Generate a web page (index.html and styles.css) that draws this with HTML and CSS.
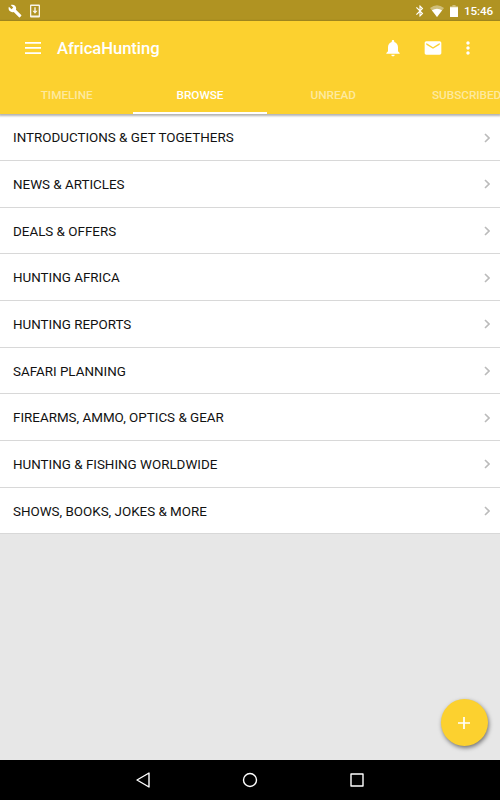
FILE: index.html
```
<!DOCTYPE html>
<html lang="en">
<head>
<meta charset="utf-8">
<title>AfricaHunting</title>
<link rel="stylesheet" href="styles.css">
</head>
<body>
<div class="screen">
  <div class="status">
    <svg class="wrench" viewBox="0 0 24 24"><path d="M22.7 19l-9.1-9.1c.9-2.3.4-5-1.5-6.9-2-2-5-2.4-7.4-1.3L9 6 6 9 1.6 4.7C.4 7.1.9 10.1 2.9 12.1c1.900 1.900 4.600 2.400 6.900 1.500l9.100 9.100c.4.4 1 .4 1.400 0l2.300-2.300c.5-.4.5-1.100.1-1.400z"/></svg>
    <svg class="download" viewBox="0 0 10 14"><path fill-rule="evenodd" d="M1 .5h8q1 0 1 1v11q0 1-1 1H1q-1 0-1-1v-11q0-1 1-1zM1.300 2v9.400h7.400V2z"/><path d="M4.300 3.200h1.400v3.600h1.900L5 9.800 2.400 6.800h1.900z"/></svg>
    <span class="spacer"></span>
    <svg class="bluetooth" viewBox="5 2 14 20"><path d="M17.710 7.710L12 2h-1v7.590L6.410 5 5 6.410 10.590 12 5 17.590 6.410 19 11 14.410V22h1l5.710-5.710-4.300-4.290 4.300-4.290zM13 5.830l1.880 1.880L13 9.590V5.830zm1.880 10.460L13 18.170v-3.760l1.880 1.880z"/></svg>
    <svg class="wifi" viewBox="0 0 14 12"><path opacity=".4" d="M7 12L0 3Q7-2.600 14 3z"/><path d="M7 12L1.900 5.300Q7 2.200 12.100 5.300z"/></svg>
    <svg class="battery" viewBox="0 0 8 12"><path opacity=".4" d="M2.400 0h3.200v1.200H8v2H0v-2h2.400z"/><path d="M0 2.200h8V11.400q0 .6-.6.6H.6q-.6 0-.6-.6z"/></svg>
    <span class="clock">15:46</span>
  </div>
  <header class="appbar">
    <div class="toolbar">
      <svg class="menu" viewBox="0 0 16 12"><path d="M0 0h16v1.700H0zM0 5.100h16v1.700H0zM0 10.200h16v1.700H0z"/></svg>
      <h1 class="title">AfricaHunting</h1>
      <span class="spacer"></span>
      <svg class="action bell" viewBox="0 0 24 24"><path d="M12 22c1.100 0 2-.9 2-2h-4c0 1.100.89 2 2 2zm6-6v-5c0-3.070-1.640-5.640-4.500-6.320V4c0-.83-.67-1.500-1.500-1.500s-1.500.67-1.500 1.500v.68C7.630 5.360 6 7.920 6 11v5l-2 2v1h16v-1l-2-2z"/></svg>
      <svg class="action mail" viewBox="0 0 24 24"><path d="M20 4H4c-1.100 0-1.990.9-1.990 2L2 18c0 1.100.9 2 2 2h16c1.100 0 2-.9 2-2V6c0-1.100-.9-2-2-2zm0 4l-8 5-8-5V6l8 5 8-5v2z"/></svg>
      <svg class="action more" viewBox="0 0 24 24"><path d="M12 8c1.100 0 2-.9 2-2s-.9-2-2-2-2 .9-2 2 .9 2 2 2zm0 2c-1.100 0-2 .9-2 2s.9 2 2 2 2-.9 2-2-.9-2-2-2zm0 6c-1.100 0-2 .9-2 2s.9 2 2 2 2-.9 2-2-.9-2-2-2z"/></svg>
    </div>
    <nav class="tabs">
      <span class="tab">TIMELINE</span>
      <span class="tab active">BROWSE</span>
      <span class="tab">UNREAD</span>
      <span class="tab">SUBSCRIBED</span>
    </nav>
  </header>
  <main class="content">
    <ul class="forums">
      <li class="forum"><span>INTRODUCTIONS &amp; GET TOGETHERS</span><svg class="chevron" viewBox="0 0 6 10"><path d="M1 1l4 4-4 4"/></svg></li>
      <li class="forum"><span>NEWS &amp; ARTICLES</span><svg class="chevron" viewBox="0 0 6 10"><path d="M1 1l4 4-4 4"/></svg></li>
      <li class="forum"><span>DEALS &amp; OFFERS</span><svg class="chevron" viewBox="0 0 6 10"><path d="M1 1l4 4-4 4"/></svg></li>
      <li class="forum"><span>HUNTING AFRICA</span><svg class="chevron" viewBox="0 0 6 10"><path d="M1 1l4 4-4 4"/></svg></li>
      <li class="forum"><span>HUNTING REPORTS</span><svg class="chevron" viewBox="0 0 6 10"><path d="M1 1l4 4-4 4"/></svg></li>
      <li class="forum"><span>SAFARI PLANNING</span><svg class="chevron" viewBox="0 0 6 10"><path d="M1 1l4 4-4 4"/></svg></li>
      <li class="forum"><span>FIREARMS, AMMO, OPTICS &amp; GEAR</span><svg class="chevron" viewBox="0 0 6 10"><path d="M1 1l4 4-4 4"/></svg></li>
      <li class="forum"><span>HUNTING &amp; FISHING WORLDWIDE</span><svg class="chevron" viewBox="0 0 6 10"><path d="M1 1l4 4-4 4"/></svg></li>
      <li class="forum"><span>SHOWS, BOOKS, JOKES &amp; MORE</span><svg class="chevron" viewBox="0 0 6 10"><path d="M1 1l4 4-4 4"/></svg></li>
    </ul>
    <button class="fab" aria-label="New topic"><svg viewBox="0 0 12 12"><path d="M6 0v12M0 6h12"/></svg></button>
  </main>
  <footer class="navbar">
    <svg viewBox="0 0 16 16"><path d="M14 1v14L2 8z"/></svg>
    <svg viewBox="0 0 16 16"><circle cx="8" cy="8" r="6.500"/></svg>
    <svg viewBox="0 0 16 16"><rect x="2" y="2" width="12" height="12"/></svg>
  </footer>
</div>
</body>
</html>
```
FILE: styles.css
```
* { box-sizing: border-box; }
body { margin: 0; font-family: Roboto, "Liberation Sans", sans-serif; }
svg { display: block; flex: none; fill: #fff; }
.screen { width: 500px; height: 800px; display: flex; flex-direction: column; overflow: hidden; background: #e7e7e7; }
.spacer { flex: 1; }

.status { flex: none; height: 21px; padding: 0 6px 0 8px; display: flex; align-items: center; background: #b09322; color: #fff; }
.wrench { width: 14px; height: 14px; }
.download { width: 10px; height: 14px; margin-left: 8px; opacity: .9; }
.bluetooth { width: 8px; height: 12px; margin-right: 6px; }
.wifi { width: 14px; height: 12px; margin-right: 6px; }
.battery { width: 8px; height: 12px; margin-right: 6px; }
.clock { width: 30px; font-size: 11.67px; font-weight: 500; line-height: 21px; padding-top: 1px; letter-spacing: -.1px; }

.appbar { flex: none; height: 93px; position: relative; z-index: 1; background: #fcd12f; box-shadow: 0 1px 2px 1px rgba(0, 0, 0, .3); }
.toolbar { height: 53px; padding: 0 22px 0 25px; display: flex; align-items: center; color: #fff; }
.menu { width: 16px; height: 12px; }
.title { margin: 2px 0 0 16px; font-size: 16.67px; line-height: 20px; font-weight: 500; letter-spacing: -.08px; }
.action { width: 20px; height: 20px; }
.bell { margin-right: 20px; }
.mail { margin-right: 15px; }
.tabs { height: 40px; display: flex; overflow: hidden; }
.tab { flex: 0 0 133.333px; text-align: center; font-size: 11.8px; line-height: 42px; font-weight: 500; letter-spacing: -.05px; color: rgba(255, 255, 255, .55); }
.tab.active { color: #fff; border-bottom: 2px solid #fff; }

.content { flex: 1; position: relative; padding-top: .35px; }
.forums { list-style: none; margin: 0; padding: 0; }
.forum { height: 46.667px; padding: 0 10px 0 13px; display: flex; align-items: center; justify-content: space-between; background: #fff; border-bottom: 1px solid #d8d8d8; font-size: 13.4px; color: #111; }
.forum span { padding-top: 1.4px; }
.chevron { width: 6px; height: 10px; margin-top: 1px; fill: none; stroke: #bbb; stroke-width: 1.6; }
.fab { position: absolute; right: 12px; bottom: 14px; width: 47px; height: 47px; padding: 0; border: 0; border-radius: 50%; display: flex; align-items: center; justify-content: center; background: #fcd12f; box-shadow: 1px 2px 4px rgba(0, 0, 0, .5); }
.fab svg { width: 12px; height: 12px; margin-right: 1px; stroke: #fff; stroke-width: 1.7; }

.navbar { flex: none; height: 40px; display: flex; align-items: center; justify-content: center; gap: 91px; background: #000; }
.navbar svg { width: 16px; height: 16px; fill: none; stroke: #fff; stroke-width: 1.4; stroke-linejoin: round; }
```
